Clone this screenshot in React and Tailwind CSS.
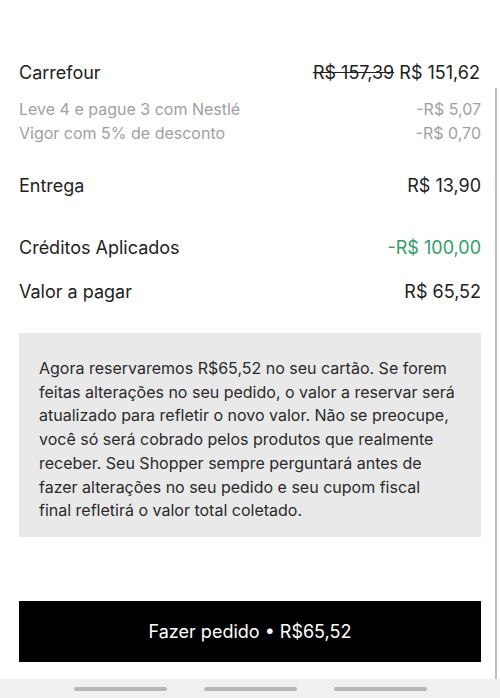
import React from 'react';

const Row = ({ label, value, className = '' }) => (
  <div className={`flex items-center justify-between ${className}`}>
    <span>{label}</span>
    <span>{value}</span>
  </div>
);

export default function App() {
  return (
    <div className="relative w-[500px] h-[698px] bg-white overflow-hidden font-['Inter',sans-serif] text-[#222222]">
      {/* scroll indicator */}
      <div className="absolute right-[3px] top-[88px] w-[2px] h-[591px] bg-[#bdbdbd]" />

      <div className="px-[19px] pt-[58px]">
        <Row
          label="Carrefour"
          value={
            <>
              <span className="line-through">R$ 157,39</span> R$ 151,62
            </>
          }
          className="text-[18px] h-[28px] pr-[1px]"
        />
        <div className="mt-[11px] text-[16px] text-[#a0a0a0] leading-[24px]">
          <Row label="Leve 4 e pague 3 com Nestlé" value="-R$ 5,07" />
          <Row label="Vigor com 5% de desconto" value="-R$ 0,70" />
        </div>

        <Row label="Entrega" value="R$ 13,90" className="text-[18px] h-[28px] mt-[26px]" />
        <Row
          label="Créditos Aplicados"
          value={<span className="text-[#2e9e68]">-R$ 100,00</span>}
          className="text-[18px] h-[28px] mt-[34px]"
        />
        <Row label="Valor a pagar" value="R$ 65,52" className="text-[18px] h-[28px] mt-[16px]" />

        <div className="mt-[28px] bg-[#e9e9ea] h-[204px] px-[20px] pt-[24px] text-[16px] leading-[23.7px] text-[#2a2a2a]">
          Agora reservaremos R$65,52 no seu cartão. Se forem feitas alterações no seu pedido, o valor a reservar será atualizado para refletir o novo valor. Não se preocupe, você só será cobrado pelos produtos que realmente receber. Seu Shopper sempre perguntará antes de fazer alterações no seu pedido e seu cupom fiscal<br />
          final refletirá o valor total coletado.
        </div>

        <button className="mt-[64px] w-full h-[61px] bg-black text-white text-[18px] flex items-center justify-center">
          Fazer pedido • R$65,52
        </button>
      </div>

      <div className="absolute left-0 right-0 bottom-0 h-[19px] bg-[#f0f0f0] flex items-center justify-center gap-[37px]">
        <div className="w-[93px] h-[4px] rounded-full bg-[#b7b7b7]" />
        <div className="w-[93px] h-[4px] rounded-full bg-[#b7b7b7]" />
        <div className="w-[93px] h-[4px] rounded-full bg-[#b7b7b7]" />
      </div>
    </div>
  );
}
